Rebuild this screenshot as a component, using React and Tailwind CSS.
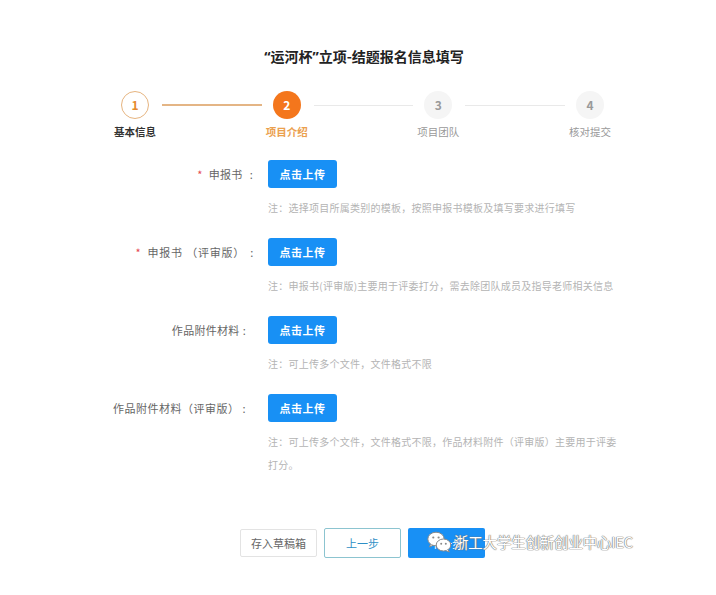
import React from "react";

const font = "font-['Noto_Sans_CJK_SC','Noto_Sans',sans-serif]";

function Step({ n, state }) {
  if (state === "done")
    return (
      <div className="w-[28px] h-[28px] rounded-full border-[1.5px] border-[#e6b47f] bg-white flex items-center justify-center text-[12px] font-bold text-[#e58a2c]">
        {n}
      </div>
    );
  if (state === "active")
    return (
      <div className="w-[28px] h-[28px] rounded-full bg-[#f4761c] flex items-center justify-center text-[12px] font-bold text-white">
        {n}
      </div>
    );
  return (
    <div className="w-[28px] h-[28px] rounded-full bg-[#f5f5f5] flex items-center justify-center text-[12px] font-bold text-[#9a9a9a]">
      {n}
    </div>
  );
}

function Row({ label, required, hint, labelClass, colonClass }) {
  return (
    <div className="flex items-start">
      <div className={`w-[256px] h-[28px] flex items-center justify-end text-[11px] text-[#666] ${labelClass}`}>
        {required && <span className="text-[#e5484d] mr-[6px]">*</span>}
        <span>{label}</span>
        <span className={colonClass}>:</span>
      </div>
      <div className="ml-[12px] flex flex-col">
        <button className="w-[69px] h-[28px] rounded-[3px] bg-[#1890f5] text-white text-[11px] font-bold tracking-[0.5px]">
          点击上传
        </button>
        <div className="mt-[8px] text-[10px] leading-[23px] text-[#b4b4b4] tracking-[0.25px]">
          {hint}
        </div>
      </div>
    </div>
  );
}

function WeChatIcon() {
  return (
    <svg width="25" height="22" viewBox="0 0 25 22">
      <ellipse cx="9" cy="8" rx="8.2" ry="6.8" fill="#fff" stroke="#8a8a8a" strokeWidth="1" />
      <path d="M3.5 13.2 L2.6 16 L6 14.2" fill="#fff" stroke="#8a8a8a" strokeWidth="1" />
      <circle cx="6.3" cy="6.5" r="1.1" fill="#8a8a8a" />
      <circle cx="11.6" cy="6.5" r="1.1" fill="#8a8a8a" />
      <ellipse cx="16.5" cy="14" rx="7.3" ry="6" fill="#fff" stroke="#8a8a8a" strokeWidth="1" />
      <path d="M21 18.5 L22.3 21 L18.8 19.6" fill="#fff" stroke="#8a8a8a" strokeWidth="1" />
      <circle cx="14.2" cy="12.8" r="1" fill="#8a8a8a" />
      <circle cx="18.8" cy="12.8" r="1" fill="#8a8a8a" />
    </svg>
  );
}

export default function App() {
  const q = "font-['Noto_Sans',sans-serif]";
  return (
    <div className={`${font} w-[716px] h-[595px] bg-white overflow-hidden`}>
      <div className="pt-[46px] pl-[12px] text-center text-[14px] leading-[20px] font-bold text-[#222]">
        <span className={q}>“</span>运河杯<span className={q}>”</span>立项-结题报名信息填写
      </div>

      <div className="mt-[24px] pl-[121px] w-[604px] box-content">
        <div className="flex items-center w-[483px]">
          <Step n="1" state="done" />
          <div className="flex-1 h-[1.5px] bg-[#e4b585] ml-[13px] mr-[11px]" />
          <Step n="2" state="active" />
          <div className="flex-1 h-px bg-[#e9e9e9] ml-[13px] mr-[11px]" />
          <Step n="3" />
          <div className="flex-1 h-px bg-[#e9e9e9] ml-[13px] mr-[11px]" />
          <Step n="4" />
        </div>
      </div>
      <div className="mt-[6px] ml-[105px] w-[515px] flex justify-between text-[10.5px] leading-[14px]">
        <div className="w-[60px] text-center font-bold text-[#333]">基本信息</div>
        <div className="w-[60px] text-center font-bold text-[#eba04e]">项目介绍</div>
        <div className="w-[60px] text-center text-[#9a9a9a]">项目团队</div>
        <div className="w-[60px] text-center text-[#9a9a9a]">核对提交</div>
      </div>

      <div className="mt-[21px] flex flex-col gap-[19px]">
        <Row
          required
          label="申报书"
          labelClass="pr-[3px] tracking-[0.3px]"
          colonClass="ml-[7px]"
          hint="注：选择项目所属类别的模板，按照申报书模板及填写要求进行填写"
        />
        <Row
          required
          label="申报书 （评审版）"
          labelClass="pr-[2px] tracking-[0.8px]"
          colonClass="ml-[5px]"
          hint="注：申报书(评审版)主要用于评委打分，需去除团队成员及指导老师相关信息"
        />
        <Row
          label="作品附件材料"
          labelClass="pr-[10px] tracking-[0.3px]"
          colonClass="ml-[3px]"
          hint="注：可上传多个文件，文件格式不限"
        />
        <Row
          label="作品附件材料（评审版）"
          labelClass="pr-[10px] tracking-[0.5px]"
          colonClass="ml-[3px]"
          hint={
            <>
              注：可上传多个文件，文件格式不限，作品材料附件（评审版）主要用于评委
              <br />
              打分。
            </>
          }
        />
      </div>

      <div className="mt-[52px] pl-[240px] flex items-center gap-[7px] relative">
        <button className="w-[77px] h-[28px] border border-[#e3e3e3] rounded-[2px] bg-white text-[11px] text-[#666]">
          存入草稿箱
        </button>
        <button className="w-[77px] h-[30px] border-[1.5px] border-[#8cc4d0] rounded-[2px] bg-white text-[11px] text-[#2e8fc6]">
          上一步
        </button>
        <button className="w-[77px] h-[30px] rounded-[2px] bg-[#1890f5] text-[11px] text-white">
          下一步
        </button>
        <div className="absolute left-[427px] top-[3px] flex items-center gap-[2px]">
          <WeChatIcon />
          <span className="text-[14.5px] leading-[20px] text-white tracking-[-0.2px] [text-shadow:0_0_1px_#777,0_0_1px_#777,0_0_1px_#777]">
            浙工大学生创新创业中心IEC
          </span>
        </div>
      </div>
    </div>
  );
}
